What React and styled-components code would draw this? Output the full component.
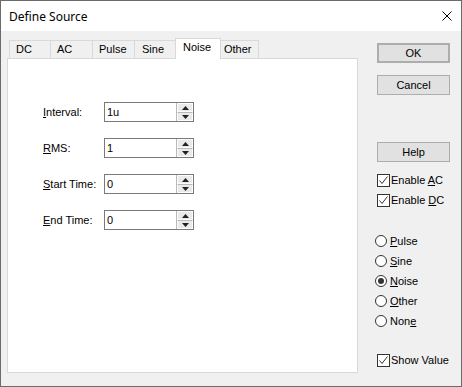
import React from 'react';
import styled, { createGlobalStyle } from 'styled-components';

const Global = createGlobalStyle`
  html, body {
    margin: 0;
    padding: 0;
    background: #ffffff;
  }
  * {
    box-sizing: border-box;
  }
`;

const Window = styled.div`
  width: 462px;
  height: 387px;
  border: 1px solid #6b6b6b;
  display: flex;
  flex-direction: column;
  font-family: "Liberation Sans", Arial, sans-serif;
  font-size: 11px;
  color: #000;
`;

const TitleBar = styled.div`
  height: 30px;
  flex: none;
  background: #ffffff;
  display: flex;
  align-items: center;
  justify-content: space-between;
  padding: 0 9px 0 8px;
`;

const Title = styled.span`
  font-family: "Noto Sans", "Open Sans", sans-serif;
  font-size: 12px;
  color: #000;
`;

const Body = styled.div`
  flex: 1;
  background: #f0f0f0;
  display: flex;
  align-items: flex-start;
  padding-left: 6px;
`;

const LeftColumn = styled.div`
  width: 351px;
  margin-top: 7px;
  display: flex;
  flex-direction: column;
`;

const TabStrip = styled.div`
  height: 20px;
  display: flex;
  align-items: flex-end;
  padding-left: 2px;
`;

const Tab = styled.div`
  width: ${p => p.$w}px;
  height: ${p => (p.$active ? 21 : 18)}px;
  margin-left: -1px;
  margin-bottom: ${p => (p.$active ? -1 : 0)}px;
  padding-left: ${p => p.$pad}px;
  border: 1px solid #d9d9d9;
  border-bottom: none;
  background: ${p => (p.$active ? '#ffffff' : '#f0f0f0')};
  line-height: ${p => (p.$active ? 17 : 16)}px;
  white-space: nowrap;
  position: relative;
  z-index: ${p => (p.$active ? 2 : 1)};
  &:first-child {
    margin-left: 0;
  }
`;

const Panel = styled.div`
  height: 315px;
  background: #ffffff;
  border: 1px solid #d9d9d9;
  padding: 43px 0 0 35px;
  display: flex;
  flex-direction: column;
  gap: 16px;
`;

const FieldRow = styled.div`
  display: flex;
  align-items: center;
  height: 20px;
`;

const FieldLabel = styled.span`
  width: 61px;
  flex: none;
`;

const Key = styled.span`
  text-decoration: underline;
  text-underline-offset: 1px;
`;

const SpinField = styled.div`
  width: 90px;
  height: 20px;
  border: 1px solid #7a7a7a;
  background: #ffffff;
  display: flex;
`;

const FieldText = styled.span`
  flex: 1;
  padding-left: 2px;
  line-height: 18px;
`;

const SpinBox = styled.div`
  width: 17px;
  display: flex;
  flex-direction: column;
  border-left: 1px solid #b9b9b9;
`;

const SpinButton = styled.div`
  flex: 1;
  background: #eaeaea;
  border: 1px solid #fdfdfd;
  border-top: ${p => (p.$down ? '1px solid #b9b9b9' : '1px solid #fdfdfd')};
  display: flex;
  align-items: center;
  justify-content: center;
`;

const RightColumn = styled.div`
  margin-left: 19px;
  padding-top: 12px;
  width: 80px;
  display: flex;
  flex-direction: column;
`;

const Button = styled.div`
  width: 73px;
  height: 20px;
  margin-top: ${p => p.$mt || 0}px;
  background: #e1e1e1;
  border: 1px solid #adadad;
  box-shadow: ${p => (p.$default ? 'inset 0 0 0 1px #adadad' : 'none')};
  display: flex;
  align-items: center;
  justify-content: center;
`;

const Group = styled.div`
  display: flex;
  flex-direction: column;
  gap: 4px;
  margin-top: ${p => p.$mt}px;
  margin-left: ${p => p.$ml || 0}px;
`;

const OptionRow = styled.div`
  height: 16px;
  display: flex;
  align-items: center;
  gap: ${p => p.$gap}px;
  white-space: nowrap;
`;

const CheckBox = styled.div`
  width: 13px;
  height: 13px;
  border: 1px solid #333333;
  background: #ffffff;
  display: flex;
  align-items: center;
  justify-content: center;
`;

const RadioCircle = styled.div`
  width: 12px;
  height: 12px;
  border-radius: 50%;
  border: 1px solid #333333;
  background: #ffffff;
  display: flex;
  align-items: center;
  justify-content: center;
`;

const RadioDot = styled.div`
  width: 6px;
  height: 6px;
  border-radius: 50%;
  background: #333333;
`;

const CloseIcon = () => (
  <svg width="10" height="10" viewBox="0 0 10 10">
    <path d="M0.5 0.5 L9.5 9.5 M9.5 0.5 L0.5 9.5" stroke="#000" strokeWidth="1" fill="none" />
  </svg>
);

const Arrow = ({ down }) => (
  <svg width="7" height="4" viewBox="0 0 7 4">
    <path d={down ? 'M0 0 H7 L3.5 4 Z' : 'M0 4 H7 L3.5 0 Z'} fill="#222" />
  </svg>
);

const Check = () => (
  <svg width="11" height="11" viewBox="0 0 11 11">
    <path d="M1.5 5.5 L4 8.5 L9.5 1.5" stroke="#333" strokeWidth="1" fill="none" />
  </svg>
);

const tabs = [
  { label: 'DC', w: 42, pad: 6 },
  { label: 'AC', w: 43, pad: 6 },
  { label: 'Pulse', w: 43, pad: 6 },
  { label: 'Sine', w: 42, pad: 7 },
  { label: 'Noise', w: 46, pad: 7, active: true },
  { label: 'Other', w: 39, pad: 3 },
];

const fields = [
  { key: 'I', rest: 'nterval:', value: '1u' },
  { key: 'R', rest: 'MS:', value: '1' },
  { key: 'S', rest: 'tart Time:', value: '0' },
  { key: 'E', rest: 'nd Time:', value: '0' },
];

const radios = [
  { pre: '', key: 'P', post: 'ulse' },
  { pre: '', key: 'S', post: 'ine' },
  { pre: '', key: 'N', post: 'oise', on: true },
  { pre: '', key: 'O', post: 'ther' },
  { pre: 'Non', key: 'e', post: '' },
];

const Checked = ({ children }) => (
  <OptionRow $gap={1}>
    <CheckBox><Check /></CheckBox>
    <span>{children}</span>
  </OptionRow>
);

export default function App() {
  return (
    <>
      <Global />
      <Window>
        <TitleBar>
          <Title>Define Source</Title>
          <CloseIcon />
        </TitleBar>
        <Body>
          <LeftColumn>
            <TabStrip>
              {tabs.map(t => (
                <Tab key={t.label} $w={t.w} $pad={t.pad} $active={t.active}>{t.label}</Tab>
              ))}
            </TabStrip>
            <Panel>
              {fields.map(f => (
                <FieldRow key={f.key}>
                  <FieldLabel><Key>{f.key}</Key>{f.rest}</FieldLabel>
                  <SpinField>
                    <FieldText>{f.value}</FieldText>
                    <SpinBox>
                      <SpinButton><Arrow /></SpinButton>
                      <SpinButton $down><Arrow down /></SpinButton>
                    </SpinBox>
                  </SpinField>
                </FieldRow>
              ))}
            </Panel>
          </LeftColumn>
          <RightColumn>
            <Button $default>OK</Button>
            <Button $mt={12}>Cancel</Button>
            <Button $mt={47}>Help</Button>
            <Group $mt={10}>
              <Checked>Enable <Key>A</Key>C</Checked>
              <Checked>Enable <Key>D</Key>C</Checked>
            </Group>
            <Group $mt={25} $ml={-2}>
              {radios.map(r => (
                <OptionRow key={r.key + r.post} $gap={3}>
                  <RadioCircle>{r.on && <RadioDot />}</RadioCircle>
                  <span>{r.pre}<Key>{r.key}</Key>{r.post}</span>
                </OptionRow>
              ))}
            </Group>
            <Group $mt={23}>
              <Checked>Show Value</Checked>
            </Group>
          </RightColumn>
        </Body>
      </Window>
    </>
  );
}
